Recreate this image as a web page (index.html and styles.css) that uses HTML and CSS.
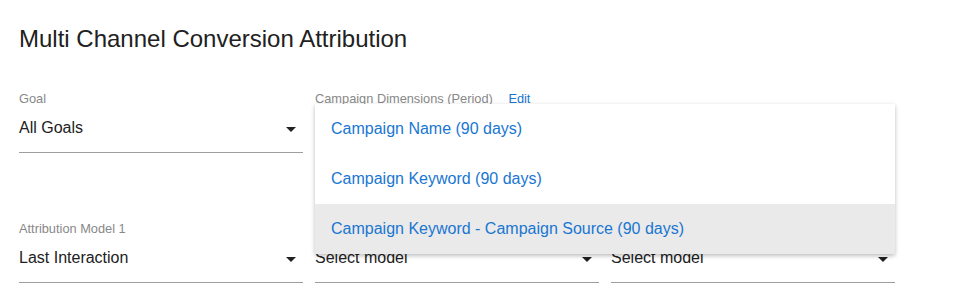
FILE: index.html
```html
<!DOCTYPE html>
<html lang="en">
<head>
    <meta charset="UTF-8">
    <title>Multi Channel Conversion Attribution</title>
    <link rel="stylesheet" href="styles.css">
</head>
<body>
    <div class="page">
        <h1 class="title">Multi Channel Conversion Attribution</h1>

        <div class="row">
            <div class="field">
                <div class="field-label">Goal</div>
                <div class="select">
                    <span class="select-value">All Goals</span>
                    <svg class="caret" viewBox="0 0 24 24" width="24" height="24"><path d="M7 10l5 5 5-5z"/></svg>
                </div>
            </div>
            <div class="field field-wide">
                <div class="field-label">Campaign Dimensions (Period) <a class="edit-link">Edit</a></div>
                <ul class="menu">
                    <li class="menu-item">Campaign Name (90 days)</li>
                    <li class="menu-item">Campaign Keyword (90 days)</li>
                    <li class="menu-item active">Campaign Keyword - Campaign Source (90 days)</li>
                </ul>
            </div>
        </div>

        <div class="row row-models">
            <div class="field">
                <div class="field-label">Attribution Model 1</div>
                <div class="select">
                    <span class="select-value">Last Interaction</span>
                    <svg class="caret" viewBox="0 0 24 24" width="24" height="24"><path d="M7 10l5 5 5-5z"/></svg>
                </div>
            </div>
            <!-- labels of models 2 and 3 sit under the open menu -->
            <div class="field">
                <div class="field-label">&nbsp;</div>
                <div class="select">
                    <span class="select-value">Select model</span>
                    <svg class="caret" viewBox="0 0 24 24" width="24" height="24"><path d="M7 10l5 5 5-5z"/></svg>
                </div>
            </div>
            <div class="field">
                <div class="field-label">&nbsp;</div>
                <div class="select">
                    <span class="select-value">Select model</span>
                    <svg class="caret" viewBox="0 0 24 24" width="24" height="24"><path d="M7 10l5 5 5-5z"/></svg>
                </div>
            </div>
        </div>
    </div>
</body>
</html>
```

FILE: styles.css
```css
body {
    margin: 0;
    background: #fff;
    font-family: "Liberation Sans", Arial, sans-serif;
    color: #212121;
    overflow: hidden;
}
.page {
    width: 876px;
    padding: 25px 0 0 19px;
}
.title {
    margin: 0;
    font-size: 24px;
    font-weight: 400;
    line-height: 28px;
    color: #212121;
}
.row {
    display: grid;
    grid-template-columns: repeat(3, 1fr);
    column-gap: 12px;
    margin-top: 39px;
}
.row-models {
    margin-top: 69px;
}
.field {
    position: relative;
}
.field-label {
    font-size: 12.8px;
    line-height: 14px;
    color: #888;
    white-space: nowrap;
}
.edit-link {
    color: #1976d2;
    margin-left: 12px;
    cursor: pointer;
}
.select {
    position: relative;
    padding: 12px 0 14px;
    border-bottom: 1px solid #9e9e9e;
}
.select-value {
    display: block;
    font-size: 16px;
    line-height: 20px;
    color: #212121;
}
.caret {
    position: absolute;
    right: 0;
    top: 11px;
    fill: #212121;
}
.menu {
    position: absolute;
    top: 12px;
    left: 0;
    width: 580px;
    margin: 0;
    padding: 0;
    list-style: none;
    background: #fff;
    z-index: 2;
    box-shadow: 0 2px 4px rgba(0, 0, 0, 0.2), 0 1px 6px rgba(0, 0, 0, 0.08);
}
.menu-item {
    height: 50px;
    box-sizing: border-box;
    padding: 15px 16px 15px;
    font-size: 16px;
    line-height: 20px;
    color: #1976d2;
    cursor: pointer;
}
.menu-item.active {
    background: #eaeaea;
}
```
